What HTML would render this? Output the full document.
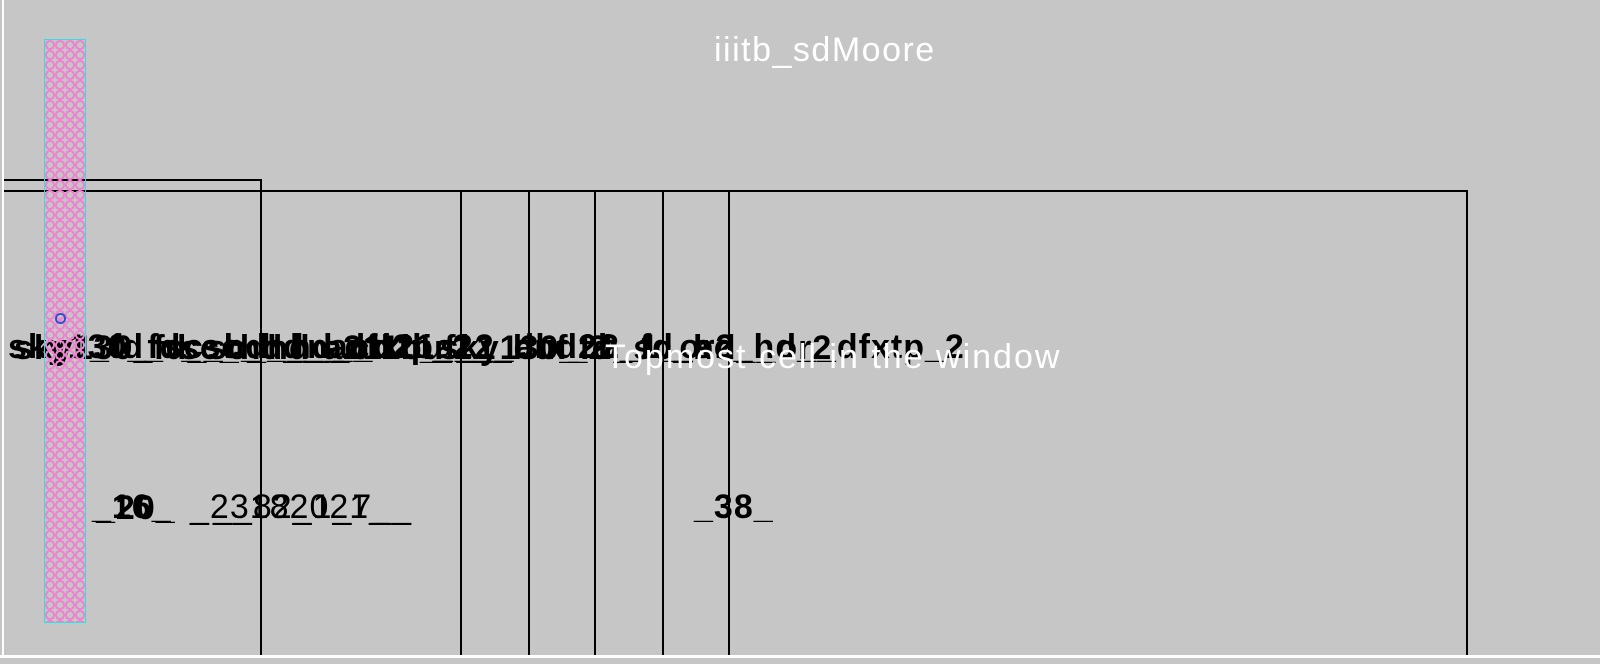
<!DOCTYPE html>
<html><head><style>
body{margin:0;width:1600px;height:664px;background:#c6c6c6;position:relative;overflow:hidden;font-family:"Liberation Sans",sans-serif}
.a{position:absolute}
.h{position:absolute;height:2px;background:#000}
.v{position:absolute;width:2px;background:#000}
.t{position:absolute;color:#000;font-size:34px;white-space:nowrap;line-height:1;font-weight:bold;letter-spacing:1px}
</style></head><body>
<div class="a" style="left:2px;top:0;width:2px;height:658px;background:#fff"></div>
<div class="a" style="left:0;top:655px;width:1600px;height:3px;background:#fff"></div>
<div class="h" style="left:4px;top:179px;width:258px"></div>
<div class="h" style="left:4px;top:190px;width:1464px"></div>
<div class="v" style="left:260px;top:179px;height:476px"></div>
<div class="v" style="left:460px;top:190px;height:465px"></div>
<div class="v" style="left:528px;top:190px;height:465px"></div>
<div class="v" style="left:594px;top:190px;height:465px"></div>
<div class="v" style="left:662px;top:190px;height:465px"></div>
<div class="v" style="left:728px;top:190px;height:465px"></div>
<div class="v" style="left:1466px;top:190px;height:465px"></div>
<div class="t" style="left:8px;top:330px">sky130_fd_sc_hd__dfxtp_2</div>
<div class="t" style="left:14px;top:331px">sky130_fd_sc_hd__clkbuf_1</div>
<div class="t" style="left:90px;top:330px">_fd_sc_hd__nand2b_2__dlx</div>
<div class="t" style="left:180px;top:331px">sc_hd__a211oi_1__buf_2</div>
<div class="t" style="left:290px;top:330px">hd__o21a_2_and2b_1_or2</div>
<div class="t" style="left:420px;top:331px">_sky130_fd_sc_hd__or2</div>
<div class="t" style="left:600px;top:330px">2_fd_sc_hd__dfxtp_2</div>
<div class="t" style="left:92px;top:490px">_16_</div>
<div class="t" style="left:96px;top:491px">_20_</div>
<div class="t" style="left:190px;top:490px;font-weight:normal">_23182021_</div>
<div class="t" style="left:213px;top:490px;font-weight:normal">__82_1_7__</div>
<div class="t" style="left:694px;top:490px">_38_</div>
<div class="a" style="left:44px;top:39px;width:40px;height:582px;border:1px solid #30e0e0;background:repeating-radial-gradient(circle at 50% 50%,transparent 0 3px,#f080d0 3px 5px,transparent 5px 6px);background-size:10px 10px"></div>
<div class="a" style="left:55px;top:313px;width:11px;height:11px;border:2px solid #3050d0;border-radius:5px;box-sizing:border-box"></div>
<div class="a" style="left:714px;top:31px;font-size:34px;color:#fff;letter-spacing:1.5px">iiitb_sdMoore</div>
<div class="a" style="left:605px;top:338px;font-size:34px;color:#fff;white-space:nowrap;letter-spacing:2px">Topmost cell in the window</div>
</body></html>
